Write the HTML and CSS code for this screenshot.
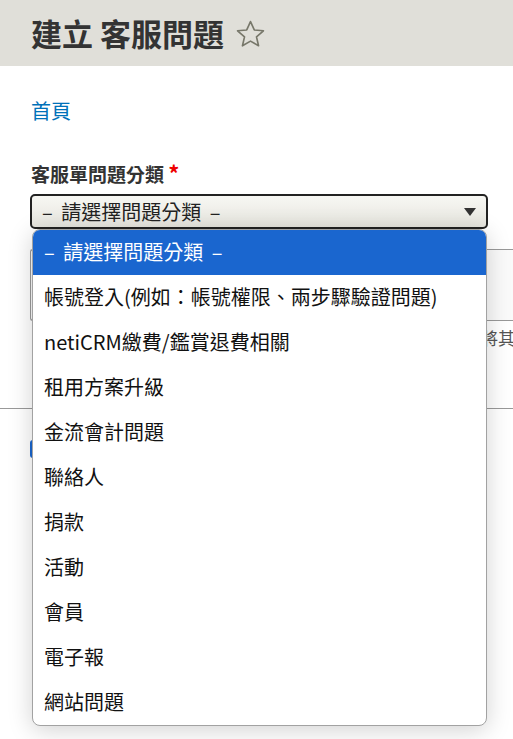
FILE: index.html
```html
<!DOCTYPE html>
<html>
<head lang="zh-Hant">
  <meta charset="UTF-8">
  <title>建立 客服問題</title>
  <link rel="stylesheet" href="styles.css">
</head>
<body>
  <div class="page-head">
    <h1>建立 客服問題</h1>
    <svg class="star" width="33" height="33" viewBox="0 0 24 24">
      <path d="M12 2.6l2.75 6.1 6.65.6-5.05 4.4 1.5 6.5L12 16.8l-5.85 3.4 1.5-6.5L2.6 9.3l6.65-.6z" fill="none" stroke="#77776a" stroke-width="1.2" stroke-linejoin="round"/>
    </svg>
  </div>

  <div class="content">
    <a class="crumb" href="#">首頁</a>

    <div class="field">
      <label class="field-label">客服單問題分類 <span class="req">*</span></label>
      <div class="select-wrap">
        <div class="select">
          <span class="dashed">– 請選擇問題分類 –</span>
          <i class="arrow"></i>
        </div>
        <ul class="options">
          <li class="active dashed">– 請選擇問題分類 –</li>
          <li>帳號登入(例如：帳號權限、兩步驟驗證問題)</li>
          <li>netiCRM繳費/鑑賞退費相關</li>
          <li>租用方案升級</li>
          <li>金流會計問題</li>
          <li>聯絡人</li>
          <li>捐款</li>
          <li>活動</li>
          <li>會員</li>
          <li>電子報</li>
          <li>網站問題</li>
        </ul>
      </div>
    </div>

    <div class="field field-text">
      <div class="textarea"></div>
      <p class="desc">請詳細描述您遇到的問題與操作步驟，如有錯誤訊息請一併將其轉交專人處理。</p>
    </div>
  </div>
  <hr class="line">
  <div class="check">
    <span class="box"></span>
    <span>我已閱讀說明</span>
  </div>
</body>
</html>
```

FILE: styles.css
```css
* {
  margin: 0;
  padding: 0;
  box-sizing: border-box;
}
html,
body {
  min-height: 739px;
}
body {
  font-family: "Noto Sans CJK TC", "Noto Sans", sans-serif;
  color: #222;
  background: #fff;
}
ul {
  list-style: none;
}
.page-head {
  height: 66px;
  background: #e0dfd9;
  display: flex;
  align-items: center;
  padding: 0 0 0 31px;
}
.page-head h1 {
  font-size: 31px;
  font-weight: bold;
  color: #333;
  line-height: 1.2;
}
.star {
  margin-left: 10px;
  margin-top: 2px;
}
.content {
  padding: 30px 25px 0 30px;
  position: relative;
  z-index: 2;
}
.crumb {
  display: inline-block;
  color: #0071b9;
  text-decoration: none;
  font-size: 20px;
  line-height: 30px;
  padding-left: 1px;
}
.field {
  margin-top: 33px;
}
.field-label {
  display: block;
  font-size: 19px;
  font-weight: bold;
  color: #333;
  line-height: 26px;
  padding-left: 1px;
  margin-bottom: 7px;
}
.req {
  color: #e00;
  font-size: 22px;
}
.select-wrap {
  position: relative;
  z-index: 3;
}
.select {
  height: 35px;
  border: 2px solid #222;
  border-radius: 5px;
  background: linear-gradient(#f7f7f3, #e6e5de);
  display: flex;
  align-items: center;
  justify-content: space-between;
  padding: 0 10px;
  font-size: 20px;
  color: #222;
}
.dashed {
  word-spacing: 4px;
}
.arrow {
  width: 0;
  height: 0;
  border-left: 6px solid transparent;
  border-right: 6px solid transparent;
  border-top: 8px solid #333;
}
.options {
  position: absolute;
  left: 2px;
  right: 1px;
  top: 35px;
  background: #fff;
  border: 1.5px solid #a2a2a2;
  border-radius: 8px;
  overflow: hidden;
  box-shadow: 0 4px 24px rgba(0, 0, 0, 0.18);
}
.options li {
  height: 45px;
  line-height: 44px;
  padding-left: 11px;
  font-size: 20px;
  color: #111;
  white-space: nowrap;
}
.options li.active {
  background: #1a66cf;
  color: #fff;
}
.field-text {
  margin-top: 20px;
  margin-right: -25px;
  overflow: hidden;
}
.textarea {
  height: 72px;
  border: 1px solid #999;
  border-right: 0;
  border-radius: 3px 0 0 3px;
  background: #fafafa;
}
.desc {
  margin-top: 5px;
  padding-left: 9px;
  font-size: 17px;
  line-height: 24px;
  color: #555;
  white-space: nowrap;
}
.line {
  border: 0;
  border-top: 1px solid #999;
  margin-top: 58px;
}
.check {
  margin: 27px 0 0 30px;
  display: flex;
  align-items: center;
  gap: 10px;
  font-size: 17px;
}
.check .box {
  width: 18px;
  height: 18px;
  border-radius: 3px;
  background: #1a66cf;
}
```
